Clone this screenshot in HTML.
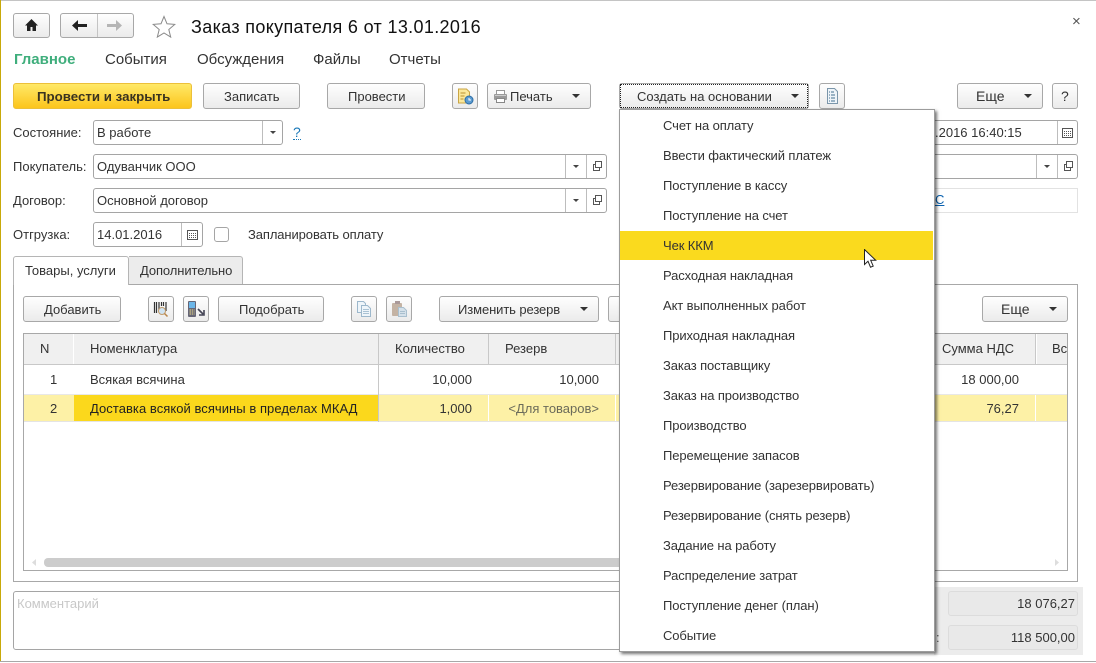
<!DOCTYPE html>
<html><head><meta charset="utf-8">
<style>
html,body{margin:0;padding:0;background:#fff}
#p{position:relative;width:1096px;height:663px;overflow:hidden;background:#fff;font-family:"Liberation Sans",sans-serif;font-size:13px;color:#333}
#p div,#p svg,#p a{position:absolute;box-sizing:border-box}
.t{white-space:nowrap;line-height:16px;height:16px}
.r{text-align:right}
.b{background:linear-gradient(#fefefe,#ebebeb);border:1px solid #a8a8a8;border-radius:3px}
.f{background:#fff;border:1px solid #a5a5a5;border-radius:3px}
.tri{width:0;height:0;border-left:4.500px solid transparent;border-right:4.500px solid transparent;border-top:4.500px solid #333}
.tr2{width:0;height:0;border-left:3px solid transparent;border-right:3px solid transparent;border-top:3.500px solid #444}
.v{width:1px;background:#bdbdbd}
.m{left:663px;white-space:nowrap;line-height:16px;height:16px;letter-spacing:-.1px}
</style></head><body>
<div id="p">
<div style="left:0;top:0;width:1096px;height:1px;background:#c4c4c4"></div>
<div style="left:0;top:0;width:1px;height:662px;background:#c8a90a"></div>
<div style="left:0;top:661px;width:1096px;height:1px;background:#a8a8a8"></div>

<!-- nav -->
<div class="b" style="left:13px;top:13px;width:37px;height:25px"></div>
<svg style="left:24px;top:18px" width="15" height="14" viewBox="0 0 15 14"><path d="M7.5 1L1 7.500h2V13h3.500V9h2v4H12V7.500h2z" fill="#222"/></svg>
<div class="b" style="left:60px;top:13px;width:74px;height:25px"></div>
<div style="left:97px;top:14px;width:1px;height:23px;background:#c4c4c4"></div>
<svg style="left:72px;top:19px" width="15" height="13" viewBox="0 0 15 13"><path d="M0 6.500L6 1v4h9v3H6v4z" fill="#222"/></svg>
<svg style="left:107px;top:19px" width="15" height="13" viewBox="0 0 15 13"><path d="M15 6.500L9 1v4H0v3h9v4z" fill="#b5b5b5"/></svg>
<svg style="left:152px;top:15px" width="24" height="23" viewBox="0 0 24 23"><path d="M12 1.500l3 7.300 7.800.6-6 5.100 1.900 7.600L12 18l-6.700 4.100 1.900-7.600-6-5.100 7.800-.6z" fill="#fff" stroke="#8a8a8a" stroke-width="1"/></svg>
<div class="t" style="left:191px;top:16px;font-size:18px;line-height:22px;height:22px;color:#111;letter-spacing:.34px">Заказ покупателя 6 от 13.01.2016</div>
<div class="t" style="left:1072px;top:14px;font-size:15px;color:#555">×</div>

<!-- section tabs -->
<div class="t" style="left:14px;top:52px;font-size:15px;font-weight:bold;color:#3fae7c">Главное</div>
<div class="t" style="left:105px;top:52px;font-size:15px">События</div>
<div class="t" style="left:197px;top:52px;font-size:15px">Обсуждения</div>
<div class="t" style="left:313px;top:52px;font-size:15px">Файлы</div>
<div class="t" style="left:389px;top:52px;font-size:15px">Отчеты</div>

<!-- toolbar -->
<div style="left:13px;top:83px;width:179px;height:26px;border-radius:3px;border:1px solid #ecc03a;background:linear-gradient(#ffe968,#fcc51c)"></div>
<div class="t" style="left:37px;top:89px;font-weight:bold;font-size:13.300px;color:#3a3320">Провести и закрыть</div>
<div class="b" style="left:203px;top:83px;width:97px;height:26px"></div>
<div class="t" style="left:224px;top:89px">Записать</div>
<div class="b" style="left:327px;top:83px;width:98px;height:26px"></div>
<div class="t" style="left:348px;top:89px">Провести</div>
<div class="b" style="left:452px;top:83px;width:26px;height:26px"></div>
<svg style="left:457px;top:88px" width="17" height="17" viewBox="0 0 17 17"><path d="M1.500 1h8l3 3v11h-11z" fill="#fbe89a" stroke="#c9a545"/><path d="M3.500 5h5M3.500 8h4M3.500 11h3" stroke="#b98f30"/><circle cx="12" cy="12" r="4" fill="#5b9bd0" stroke="#2c6ca5"/><path d="M12 10v2h2" stroke="#fff" fill="none"/></svg>
<div class="b" style="left:487px;top:83px;width:104px;height:26px"></div>
<svg style="left:493px;top:89px" width="15" height="15" viewBox="0 0 15 15"><rect x="3.500" y="1.500" width="8" height="4" fill="#fff" stroke="#999"/><rect x="1" y="5" width="13" height="6" rx="1" fill="#9a9a9a"/><rect x="3.500" y="9.500" width="8" height="4" fill="#fff" stroke="#888"/><path d="M2 6.500h11" stroke="#ccc"/></svg>
<div class="t" style="left:510px;top:89px">Печать</div>
<div class="tri" style="left:572px;top:94px"></div>
<div class="b" style="left:619px;top:83px;width:190px;height:26px"></div>
<div style="left:620px;top:84px;width:188px;height:24px;border:1px dotted #222"></div>
<div class="t" style="left:637px;top:89px">Создать на основании</div>
<div class="tri" style="left:791px;top:94px"></div>
<div class="b" style="left:819px;top:83px;width:26px;height:26px"></div>
<svg style="left:826px;top:88px" width="13" height="16" viewBox="0 0 13 16"><path d="M1.500 .5h7l3 3v12h-10z" fill="#eef4f9" stroke="#7b96aa"/><path d="M3 4h1M5 4h3M3 7h1M5 7h4M3 10h1M5 10h4M3 13h1M5 13h4" stroke="#44708f"/></svg>
<div class="b" style="left:957px;top:83px;width:86px;height:26px"></div>
<div class="t" style="left:976px;top:88px;font-size:14px">Еще</div>
<div class="tri" style="left:1024px;top:94px"></div>
<div class="b" style="left:1052px;top:83px;width:26px;height:26px"></div>
<div class="t" style="left:1061px;top:88px;font-size:14px">?</div>

<!-- form -->
<div class="t" style="left:13px;top:125px">Состояние:</div>
<div class="f" style="left:93px;top:120px;width:190px;height:25px"></div>
<div class="t" style="left:97px;top:125px">В работе</div>
<div class="v" style="left:262px;top:121px;height:23px"></div>
<div class="tr2" style="left:270px;top:131px"></div>
<div class="t" style="left:293px;top:125px;font-size:14px;color:#1a78b8;border-bottom:1px dotted #1a78b8;height:15px;line-height:15px">?</div>

<div class="t" style="left:13px;top:159px">Покупатель:</div>
<div class="f" style="left:93px;top:154px;width:514px;height:25px"></div>
<div class="t" style="left:97px;top:159px">Одуванчик ООО</div>
<div class="v" style="left:565px;top:155px;height:23px"></div>
<div class="tr2" style="left:573px;top:165px"></div>
<div class="v" style="left:586px;top:155px;height:23px"></div>
<svg style="left:592px;top:161px" width="11" height="11" viewBox="0 0 11 11"><path d="M3.500 6.500v-6h6v6zM3.500 3.500H1.500v6h6V6.500" fill="none" stroke="#555"/></svg>

<div class="t" style="left:13px;top:193px">Договор:</div>
<div class="f" style="left:93px;top:188px;width:514px;height:25px"></div>
<div class="t" style="left:97px;top:193px">Основной договор</div>
<div class="v" style="left:565px;top:189px;height:23px"></div>
<div class="tr2" style="left:573px;top:199px"></div>
<div class="v" style="left:586px;top:189px;height:23px"></div>
<svg style="left:592px;top:195px" width="11" height="11" viewBox="0 0 11 11"><path d="M3.500 6.500v-6h6v6zM3.500 3.500H1.500v6h6V6.500" fill="none" stroke="#555"/></svg>

<div class="t" style="left:13px;top:227px">Отгрузка:</div>
<div class="f" style="left:93px;top:222px;width:110px;height:25px"></div>
<div class="t" style="left:97px;top:227px">14.01.2016</div>
<div class="v" style="left:181px;top:223px;height:23px"></div>
<svg style="left:187px;top:230px" width="11" height="10" viewBox="0 0 11 10"><rect x=".5" y=".5" width="10" height="9" fill="#fff" stroke="#555"/><path d="M2 3.500h7M2 5.500h7M2 7.500h7" stroke="#555" stroke-dasharray="1 1"/></svg>
<div class="f" style="left:214px;top:227px;width:15px;height:15px"></div>
<div class="t" style="left:248px;top:227px;letter-spacing:-.1px">Запланировать оплату</div>

<!-- right fields -->
<div class="f" style="left:900px;top:120px;width:178px;height:25px"></div>
<div class="t" style="left:935px;top:125px">.2016 16:40:15</div>
<div class="v" style="left:1057px;top:121px;height:23px"></div>
<svg style="left:1062px;top:128px" width="11" height="10" viewBox="0 0 11 10"><rect x=".5" y=".5" width="10" height="9" fill="#fff" stroke="#555"/><path d="M2 3.500h7M2 5.500h7M2 7.500h7" stroke="#555" stroke-dasharray="1 1"/></svg>
<div class="f" style="left:900px;top:154px;width:178px;height:25px"></div>
<div class="v" style="left:1036px;top:155px;height:23px"></div>
<div class="tr2" style="left:1044px;top:165px"></div>
<div class="v" style="left:1057px;top:155px;height:23px"></div>
<svg style="left:1063px;top:161px" width="11" height="11" viewBox="0 0 11 11"><path d="M3.500 6.500v-6h6v6zM3.500 3.500H1.500v6h6V6.500" fill="none" stroke="#555"/></svg>
<div style="left:900px;top:188px;width:178px;height:25px;border:1px solid #e2e2e2"></div>
<div class="t" style="left:935px;top:192px;color:#0a62b0;text-decoration:underline">С</div>

<!-- tabs -->
<div style="left:13px;top:284px;width:1065px;height:298px;border:1px solid #a8a8a8"></div>
<div style="left:129px;top:256px;width:114px;height:28px;background:#ececec;border:1px solid #b5b5b5;border-left:0;border-bottom:0;border-radius:0 3px 0 0"></div>
<div style="left:13px;top:256px;width:116px;height:29px;background:#fff;border:1px solid #b5b5b5;border-bottom:0;border-radius:3px 3px 0 0"></div>
<div class="t" style="left:25px;top:263px">Товары, услуги</div>
<div class="t" style="left:140px;top:263px;letter-spacing:-.1px">Дополнительно</div>

<!-- table toolbar -->
<div class="b" style="left:23px;top:296px;width:98px;height:26px"></div>
<div class="t" style="left:44px;top:302px">Добавить</div>
<div class="b" style="left:148px;top:296px;width:26px;height:26px"></div>
<svg style="left:153px;top:301px" width="17" height="17" viewBox="0 0 17 17"><path d="M1.500 1v11M3.500 1v11M6 1v8M8.500 1v4M10.500 1v4M13 1v9" stroke="#333" stroke-width="1.200"/><circle cx="9" cy="10" r="3.500" fill="#cfe3f2" stroke="#c09a6a"/><path d="M11.500 12.500l3 3" stroke="#b9864a" stroke-width="1.500"/></svg>
<div class="b" style="left:183px;top:296px;width:26px;height:26px"></div>
<svg style="left:187px;top:300px" width="19" height="19" viewBox="0 0 19 19"><rect x="1" y="1" width="8" height="16" rx="1" fill="#667"/><rect x="2" y="2" width="6" height="6" fill="#6cb6e8"/><path d="M2.500 10h5M2.500 12h5M2.500 14h5" stroke="#eedc88" stroke-dasharray="1.500 .7"/><path d="M11 9l5 5M17 10v5h-5" stroke="#445" stroke-width="1.600" fill="none"/></svg>
<div class="b" style="left:218px;top:296px;width:106px;height:26px"></div>
<div class="t" style="left:239px;top:302px">Подобрать</div>
<div class="b" style="left:351px;top:296px;width:26px;height:26px"></div>
<svg style="left:356px;top:301px" width="16" height="16" viewBox="0 0 16 16"><path d="M1.500 .5h6l2 2v9h-8z" fill="#eef5fa" stroke="#9db8cc"/><path d="M5.500 4.500h6l3 3v8h-9z" fill="#eef5fa" stroke="#9db8cc"/><path d="M7 8.500h6M7 10.500h6M7 12.500h6" stroke="#a9c2d4"/></svg>
<div class="b" style="left:386px;top:296px;width:26px;height:26px"></div>
<svg style="left:391px;top:300px" width="17" height="18" viewBox="0 0 17 18"><rect x="1" y="3" width="10" height="13" rx="1" fill="#c4b3a4"/><rect x="4" y="1" width="5" height="3" fill="#a99"/><path d="M7.500 7.500h5l3 3v6h-8z" fill="#d5e1ea" stroke="#a9bfce"/><path d="M9 11.500h5M9 13.500h5" stroke="#a9bfce"/></svg>
<div class="b" style="left:439px;top:296px;width:160px;height:26px"></div>
<div class="t" style="left:458px;top:302px;letter-spacing:-.1px">Изменить резерв</div>
<div class="tri" style="left:580px;top:307px"></div>
<div class="b" style="left:608px;top:296px;width:30px;height:26px"></div>
<div class="b" style="left:982px;top:296px;width:86px;height:26px"></div>
<div class="t" style="left:1001px;top:301px;font-size:14px">Еще</div>
<div class="tri" style="left:1049px;top:307px"></div>

<!-- table -->
<div style="left:23px;top:333px;width:1045px;height:238px;border:1px solid #a8a8a8"></div>
<div style="left:24px;top:334px;width:1043px;height:30px;background:#f0f0f0"></div>
<div style="left:24px;top:364px;width:1043px;height:1px;background:#c8c8c8"></div>
<div style="left:73px;top:334px;width:1px;height:30px;background:#fff"></div>
<div style="left:378px;top:334px;width:1px;height:30px;background:#c8c8c8"></div>
<div style="left:488px;top:334px;width:1px;height:30px;background:#c8c8c8"></div>
<div style="left:615px;top:334px;width:1px;height:30px;background:#c8c8c8"></div>
<div style="left:1035px;top:334px;width:1px;height:30px;background:#c8c8c8"></div>
<div style="left:1036px;top:334px;width:1px;height:30px;background:#fff"></div>
<div style="left:24px;top:394px;width:1043px;height:1px;background:#e8e8e8"></div>
<div style="left:24px;top:395px;width:1043px;height:26px;background:#fdf1a6"></div>
<div style="left:24px;top:421px;width:1043px;height:1px;background:#e4e4e4"></div>
<div style="left:74px;top:395px;width:304px;height:26px;background:#fbd81c"></div>
<div style="left:378px;top:365px;width:1px;height:57px;background:#c8c8c8"></div>
<div style="left:488px;top:395px;width:1px;height:26px;background:#fff"></div>
<div style="left:615px;top:395px;width:1px;height:26px;background:#fff"></div>
<div style="left:1035px;top:395px;width:1px;height:26px;background:#fff"></div>
<div class="t" style="left:40px;top:341px">N</div>
<div class="t" style="left:90px;top:341px">Номенклатура</div>
<div class="t" style="left:395px;top:341px">Количество</div>
<div class="t" style="left:505px;top:341px">Резерв</div>
<div class="t" style="left:942px;top:341px">Сумма НДС</div>
<div class="t" style="left:1052px;top:341px;width:15px;overflow:hidden">Всего</div>
<div class="t" style="left:50px;top:372px">1</div>
<div class="t" style="left:90px;top:372px">Всякая всячина</div>
<div class="t r" style="left:372px;top:372px;width:100px">10,000</div>
<div class="t r" style="left:499px;top:372px;width:100px">10,000</div>
<div class="t r" style="left:919px;top:372px;width:100px">18 000,00</div>
<div class="t" style="left:50px;top:401px">2</div>
<div class="t" style="left:90px;top:401px;color:#222;letter-spacing:.05px">Доставка всякой всячины в пределах МКАД</div>
<div class="t r" style="left:372px;top:401px;width:100px">1,000</div>
<div class="t r" style="left:479px;top:401px;width:120px;color:#6b6b5a">&lt;Для товаров&gt;</div>
<div class="t r" style="left:919px;top:401px;width:100px">76,27</div>
<!-- scrollbar -->
<div style="left:44px;top:558px;width:800px;height:9px;background:#ccc;border-radius:4px"></div>
<svg style="left:32px;top:559px" width="5" height="7" viewBox="0 0 5 7"><path d="M4 0v7L0 3.500z" fill="#ddd"/></svg>
<svg style="left:1054px;top:559px" width="5" height="7" viewBox="0 0 5 7"><path d="M1 0v7l4-3.500z" fill="#ddd"/></svg>

<!-- bottom -->
<div class="f" style="left:13px;top:591px;width:700px;height:59px"></div>
<div class="t" style="left:17px;top:596px;color:#c8c8c8">Комментарий</div>
<div style="left:934px;top:587px;width:149px;height:68px;background:#ececec"></div>
<div class="t" style="left:936px;top:630px;color:#555">:</div>
<div style="left:948px;top:591px;width:130px;height:25px;background:#e9e9e9;border:1px solid #dcdcdc;border-radius:3px"></div>
<div class="t r" style="left:948px;top:596px;width:127px">18 076,27</div>
<div style="left:948px;top:625px;width:130px;height:25px;background:#e9e9e9;border:1px solid #dcdcdc;border-radius:3px"></div>
<div class="t r" style="left:948px;top:630px;width:127px">118 500,00</div>

<!-- dropdown menu -->
<div style="left:619px;top:109px;width:316px;height:543px;background:#fff;border:1px solid #9c9c9c;box-shadow:2px 2px 3px rgba(0,0,0,.55)"></div>
<div style="left:620px;top:231px;width:313px;height:29px;background:#fada1e"></div>
<div class="t m" style="top:118px">Счет на оплату</div>
<div class="t m" style="top:148px">Ввести фактический платеж</div>
<div class="t m" style="top:178px">Поступление в кассу</div>
<div class="t m" style="top:208px">Поступление на счет</div>
<div class="t m" style="top:238px">Чек ККМ</div>
<div class="t m" style="top:268px">Расходная накладная</div>
<div class="t m" style="top:298px">Акт выполненных работ</div>
<div class="t m" style="top:328px">Приходная накладная</div>
<div class="t m" style="top:358px">Заказ поставщику</div>
<div class="t m" style="top:388px">Заказ на производство</div>
<div class="t m" style="top:418px">Производство</div>
<div class="t m" style="top:448px">Перемещение запасов</div>
<div class="t m" style="top:478px">Резервирование (зарезервировать)</div>
<div class="t m" style="top:508px">Резервирование (снять резерв)</div>
<div class="t m" style="top:538px">Задание на работу</div>
<div class="t m" style="top:568px">Распределение затрат</div>
<div class="t m" style="top:598px">Поступление денег (план)</div>
<div class="t m" style="top:628px">Событие</div>
<svg style="left:864px;top:249px" width="14" height="20" viewBox="0 0 14 20"><path d="M.5.500v15l3.500-3.300 2.500 6 2.700-1.100-2.500-5.800h5z" fill="#fff" stroke="#222" stroke-width="1"/></svg>
</div>
</body></html>
